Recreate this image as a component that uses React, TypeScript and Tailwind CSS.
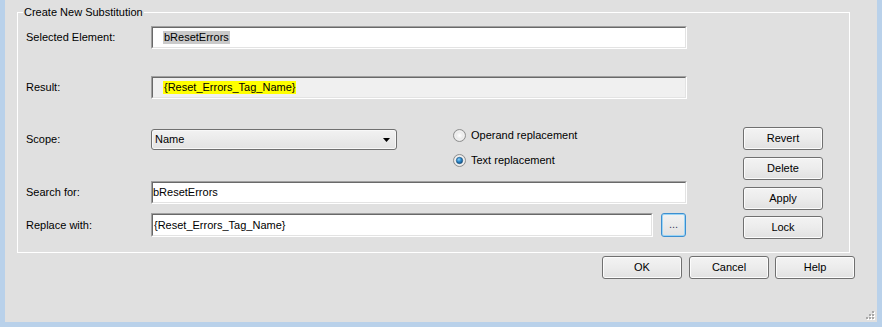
import React from "react";

function Sunken({ className, inner, children }: { className: string; inner: string; children?: React.ReactNode }) {
  return (
    <div className={"border border-t-[#a0a0a0] border-l-[#a0a0a0] border-b-white border-r-white " + className}>
      <div className={"h-full w-full border border-t-[#696969] border-l-[#696969] border-b-[#e3e3e3] border-r-[#e3e3e3] flex items-center " + inner}>
        {children}
      </div>
    </div>
  );
}

function Btn({ label, className = "" }: { label: string; className?: string }) {
  return (
    <div
      className={
        "w-[80px] h-[23px] flex items-center justify-center rounded-[3px] border border-[#707070] bg-gradient-to-b from-[#f3f3f3] via-[#ececec] to-[#e1e1e1] shadow-[inset_0_0_0_1px_#fcfcfc] text-black " +
        className
      }
    >
      {label}
    </div>
  );
}

function Radio({ checked }: { checked?: boolean }) {
  return (
    <svg width="13" height="13" viewBox="0 0 13 13">
      <defs>
        <radialGradient id="rg" cx="0.5" cy="0.5" r="0.6">
          <stop offset="0" stopColor="#ffffff" />
          <stop offset="1" stopColor="#d4d4d4" />
        </radialGradient>
        <radialGradient id="dot" cx="0.4" cy="0.35" r="0.7">
          <stop offset="0" stopColor="#8fd3fb" />
          <stop offset="0.5" stopColor="#2a86c8" />
          <stop offset="1" stopColor="#114a7a" />
        </radialGradient>
      </defs>
      <circle cx="6.5" cy="6.5" r="6" fill="url(#rg)" stroke="#8e8f8f" strokeWidth="1" />
      <circle cx="6.5" cy="6.5" r="4.5" fill="none" stroke="#f4f4f4" strokeWidth="1" />
      {checked && <circle cx="6.5" cy="6.5" r="3.2" fill="url(#dot)" stroke="#1b4f7a" strokeWidth="0.6" />}
    </svg>
  );
}

export default function App() {
  return (
    <div
      className="w-[882px] h-[327px] bg-[#b9d1ea] pl-[5px] pr-[5px] pb-[5px] text-[11px] leading-[13px] text-black"
      style={{ fontFamily: '"Liberation Sans", Arial, sans-serif' }}
    >
      <div className="relative w-[872px] h-[322px] bg-[#e0e0e0] flex flex-col">
        {/* Group box */}
        <div className="relative mt-[12px] ml-[12px] w-[833px] h-[241px] border border-white">
          <span className="absolute -top-[7px] left-[5px] px-[1px] bg-[#e0e0e0] leading-[13px]">Create New Substitution</span>
          <div className="flex pt-[13px] pl-[8px]">
            {/* Left column */}
            <div className="w-[661px] flex flex-col">
              <div className="flex items-center h-[23px]">
                <div className="w-[125px]">Selected Element:</div>
                <Sunken className="w-[536px] h-[23px] bg-white" inner="pl-[10px]">
                  <span className="bg-[#cacaca] px-[1px]">bResetErrors</span>
                </Sunken>
              </div>
              <div className="flex items-center h-[23px] mt-[27px]">
                <div className="w-[125px]">Result:</div>
                <Sunken className="w-[536px] h-[23px] bg-[#f0f0f0]" inner="pl-[10px]">
                  <span className="bg-[#ffff00] px-[1px]">{"{Reset_Errors_Tag_Name}"}</span>
                </Sunken>
              </div>
              <div className="flex items-start h-[42px] mt-[28px]">
                <div className="w-[125px] h-[21px] mt-[2px] flex items-center">Scope:</div>
                <div className="w-[246px] h-[21px] mt-[2px] rounded-[3px] border border-[#707070] bg-gradient-to-b from-[#f2f2f2] to-[#e3e3e3] shadow-[inset_0_0_0_1px_#f8f8f8] flex items-center pl-[3px] pr-[6px]">
                  <span className="flex-1">Name</span>
                  <svg width="7" height="4" viewBox="0 0 7 4">
                    <path d="M0 0 H7 L3.5 4 Z" fill="#000" />
                  </svg>
                </div>
                <div className="ml-[56px] flex flex-col gap-[8px]">
                  <div className="h-[17px] flex items-center gap-[5px]">
                    <Radio />
                    <span>Operand replacement</span>
                  </div>
                  <div className="h-[17px] flex items-center gap-[5px]">
                    <Radio checked />
                    <span>Text replacement</span>
                  </div>
                </div>
              </div>
              <div className="flex items-center h-[23px] mt-[12px]">
                <div className="w-[125px]">Search for:</div>
                <Sunken className="w-[536px] h-[23px] bg-white" inner="pl-[0px]">
                  <span>bResetErrors</span>
                </Sunken>
              </div>
              <div className="flex items-center h-[24px] mt-[9px]">
                <div className="w-[125px]">Replace with:</div>
                <Sunken className="w-[502px] h-[24px] bg-white" inner="pl-[1px]">
                  <span>{"{Reset_Errors_Tag_Name}"}</span>
                </Sunken>
                <div className="ml-[8px] w-[25px] h-[24px] rounded-[3px] border border-[#3c8fd0] bg-gradient-to-b from-[#f2f2f2] to-[#e2e2e2] shadow-[inset_0_0_0_1px_#9ad4f5] flex items-center justify-center text-[#404060] leading-none pb-[2px]">
                  ...
                </div>
              </div>
            </div>
            {/* Right column */}
            <div className="ml-[56px] mt-[101px] flex flex-col">
              <Btn label="Revert" />
              <Btn label="Delete" className="mt-[7px]" />
              <Btn label="Apply" className="mt-[7px]" />
              <Btn label="Lock" className="mt-[6px]" />
            </div>
          </div>
        </div>
        {/* Bottom buttons */}
        <div className="flex justify-end pr-[22px] mt-[3px]">
          <Btn label="OK" />
          <Btn label="Cancel" className="ml-[7px]" />
          <Btn label="Help" className="ml-[6px]" />
        </div>
        {/* Resize grip */}
        <svg className="absolute right-[2px] bottom-[2px]" width="9" height="9" viewBox="0 0 9 9">
          {[
            [6, 0],
            [3, 3],
            [6, 3],
            [0, 6],
            [3, 6],
            [6, 6],
          ].map(([x, y], i) => (
            <g key={i}>
              <rect x={x + 1} y={y + 1} width="2" height="2" fill="#ffffff" />
              <rect x={x} y={y} width="2" height="2" fill="#a8a8a8" />
            </g>
          ))}
        </svg>
      </div>
    </div>
  );
}
